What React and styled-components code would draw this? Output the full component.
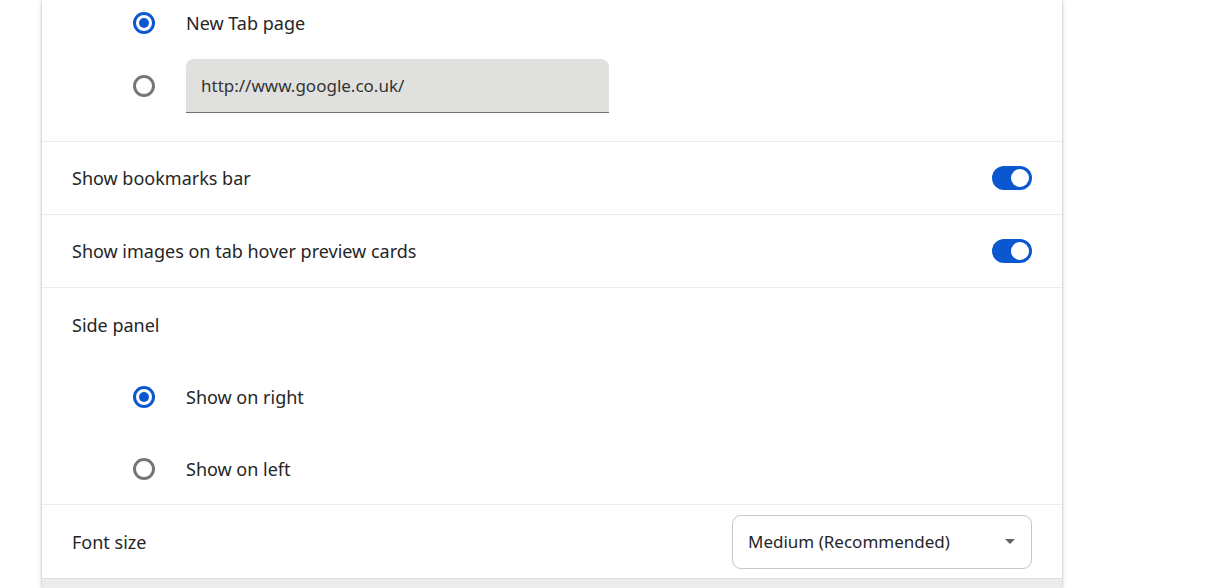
import React from "react";
import styled, { createGlobalStyle } from "styled-components";

const GlobalStyle = createGlobalStyle`
  *, *::before, *::after {
    box-sizing: border-box;
  }
  html, body {
    margin: 0;
    padding: 0;
    background: #fff;
    font-family: "Segoe UI", "Noto Sans", "Open Sans", sans-serif;
    color: #262626;
    overflow: hidden;
  }
`;

const Page = styled.div`
  width: 1225px;
  height: 588px;
  padding-left: 42px;
`;

const Card = styled.div`
  width: 1020px;
  height: 588px;
  background: #fff;
  box-shadow: 0 0 3px rgba(0, 0, 0, 0.25), 0 1px 8px rgba(0, 0, 0, 0.08);
  display: flex;
  flex-direction: column;
`;

const Section = styled.div`
  border-bottom: 1px solid #ececec;
  padding-bottom: ${(p) => p.$padBottom || 0}px;
`;

const RadioRow = styled.div`
  display: flex;
  align-items: center;
  height: ${(p) => p.$h || 72}px;
  padding-left: 91px;
  padding-top: ${(p) => p.$top || 0}px;
  font-size: 18px;
`;

const RadioCircle = styled.span`
  width: 22px;
  height: 22px;
  border-radius: 50%;
  border: 3px solid ${(p) => (p.$checked ? "#0b57d0" : "#747775")};
  display: flex;
  align-items: center;
  justify-content: center;
  margin-right: 31px;
  flex-shrink: 0;

  &::after {
    content: "";
    display: ${(p) => (p.$checked ? "block" : "none")};
    width: 10px;
    height: 10px;
    border-radius: 50%;
    background: #0b57d0;
  }
`;

const UrlInput = styled.div`
  width: 423px;
  height: 54px;
  background: #e0e1df;
  border-radius: 8px 8px 0 0;
  border-bottom: 1px solid #6f716f;
  display: flex;
  align-items: center;
  padding-left: 15px;
  font-size: 17px;
  color: #333;
`;

const SettingRow = styled.div`
  display: flex;
  align-items: center;
  justify-content: space-between;
  height: ${(p) => p.$h || 73}px;
  padding: 0 30px;
  font-size: 18px;
  border-bottom: ${(p) => (p.$divider ? "1px solid #ececec" : "none")};
`;

const Toggle = styled.span`
  width: 40px;
  height: 24px;
  border-radius: 12px;
  background: #0b57d0;
  display: flex;
  align-items: center;
  justify-content: flex-end;
  padding-right: 3px;

  &::after {
    content: "";
    width: 18px;
    height: 18px;
    border-radius: 50%;
    background: #fff;
  }
`;

const Select = styled.div`
  width: 300px;
  height: 54px;
  border: 1px solid #c7c7c7;
  border-radius: 9px;
  display: flex;
  align-items: center;
  justify-content: space-between;
  padding: 0 16px 0 15px;
  font-size: 17px;
  color: #262626;
`;

const Caret = styled.span`
  width: 0;
  height: 0;
  border-left: 5px solid transparent;
  border-right: 5px solid transparent;
  border-top: 5px solid #5f6368;
`;

const Footer = styled.div`
  flex: 1;
  background: #ececec;
  border-top: 1px solid #e0e0e0;
`;

const Radio = ({ checked, children, h, top }) => (
  <RadioRow $h={h} $top={top}>
    <RadioCircle $checked={checked} />
    {children}
  </RadioRow>
);

export default function App() {
  return (
    <>
      <GlobalStyle />
      <Page>
        <Card>
          <Section $padBottom={28}>
            <Radio checked h={46}>New Tab page</Radio>
            <Radio h={67} top={13}>
              <UrlInput>http://www.google.co.uk/</UrlInput>
            </Radio>
          </Section>
          <SettingRow $divider>
            <span>Show bookmarks bar</span>
            <Toggle />
          </SettingRow>
          <SettingRow $divider>
            <span>Show images on tab hover preview cards</span>
            <Toggle />
          </SettingRow>
          <Section>
            <SettingRow>
              <span>Side panel</span>
            </SettingRow>
            <Radio checked h={72}>Show on right</Radio>
            <Radio h={71}>Show on left</Radio>
          </Section>
          <SettingRow>
            <span>Font size</span>
            <Select>
              <span>Medium (Recommended)</span>
              <Caret />
            </Select>
          </SettingRow>
          <Footer />
        </Card>
      </Page>
    </>
  );
}
